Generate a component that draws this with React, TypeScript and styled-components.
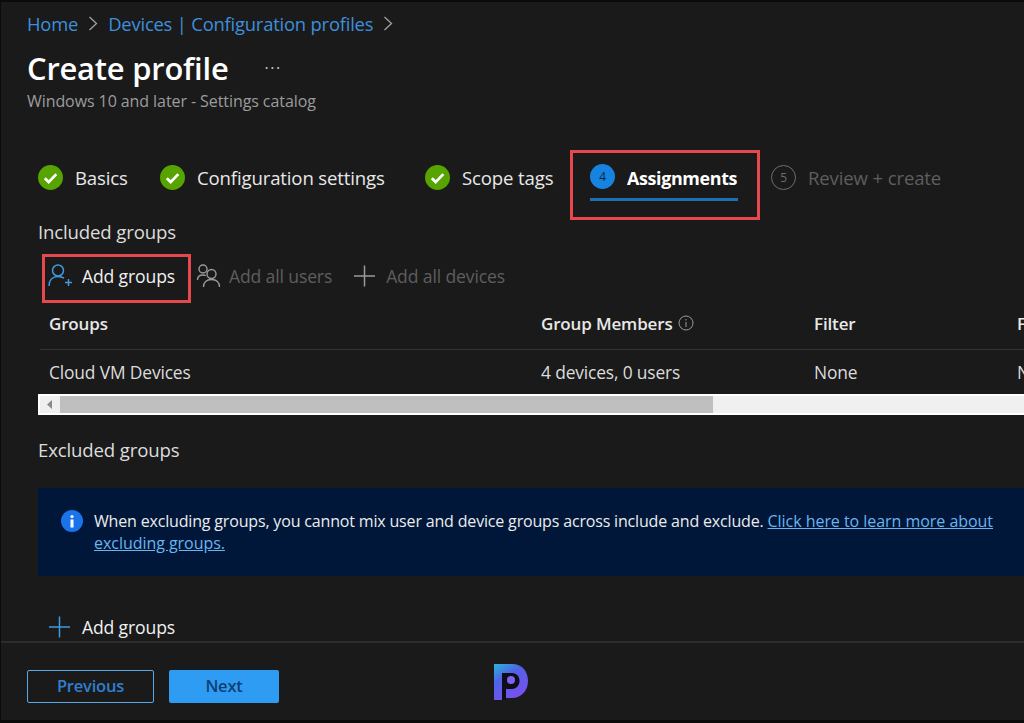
import React from "react";
import styled, { createGlobalStyle } from "styled-components";

const Global = createGlobalStyle`
  html, body { margin: 0; padding: 0; background: #1a1a1a; }
  * { box-sizing: border-box; }
`;

const FONT = `"Open Sans", "Noto Sans", "Liberation Sans", sans-serif`;

const Page = styled.div`
  width: 1024px;
  height: 723px;
  overflow: hidden;
  background: #1a1a1a;
  border-top: 2px solid #0b0b0b;
  border-bottom: 3px solid #0b0b0b;
  border-left: 1px solid #0b0b0b;
  font-family: ${FONT};
  color: #e6e6e6;
  display: flex;
  flex-direction: column;
`;

const Main = styled.div`
  height: 641px;
  flex: none;
  border-bottom: 2px solid #2c2c2c;
  overflow: hidden;
`;

const Header = styled.header`
  padding: 9px 0 0 26px;
  height: 148px;
`;

const Crumbs = styled.nav`
  display: flex;
  align-items: center;
  height: 24px;
  font-size: 18.4px;
  letter-spacing: -0.2px;
`;

const CrumbLink = styled.a`
  color: #3f8fdc;
`;

const Chevron = styled.svg`
  width: 10px;
  height: 15px;
  margin: 0 10px;
  fill: none;
  stroke: #a0a0a0;
  stroke-width: 1.3;
`;

const TitleRow = styled.div`
  display: flex;
  align-items: center;
  margin-top: 11px;
  height: 44px;
`;

const Title = styled.h1`
  margin: 0;
  font-size: 30.9px;
  font-weight: 600;
  color: #fff;
  letter-spacing: -0.2px;
`;

const More = styled.span`
  margin-left: 36px;
  font-size: 16px;
  color: #c8c8c8;
  letter-spacing: 1.5px;
  line-height: 1;
`;

const Subtitle = styled.div`
  font-size: 16px;
  color: #9c9c9c;
  letter-spacing: -0.08px;
`;

const Tabs = styled.div`
  display: flex;
  align-items: flex-start;
  height: 70px;
`;

const Step = styled.div<{ $w: number; $dim?: boolean }>`
  width: ${(p) => p.$w}px;
  height: 55px;
  display: flex;
  align-items: center;
  gap: 12px;
  padding-left: ${(p) => (p.$dim ? 11 : 0)}px;
  font-size: 18.6px;
  letter-spacing: -0.15px;
  color: ${(p) => (p.$dim ? "#5e5e5e" : "#e8e8e8")};
  flex: none;
  white-space: nowrap;
`;

const TabsLead = styled.div`
  width: 37px;
  flex: none;
`;

const Check = styled.svg`
  width: 25px;
  height: 25px;
  flex: none;
`;

const ActiveBox = styled.div`
  width: 190px;
  height: 70px;
  border: 3px solid #e5484d;
  flex: none;
  padding: 0 19px 0 17px;
`;

const ActiveInner = styled.div`
  height: 48px;
  padding-top: 4px;
  display: flex;
  align-items: center;
  gap: 12px;
  border-bottom: 3px solid #1f6fb2;
  font-size: 17.9px;
  font-weight: 700;
  color: #fff;
  letter-spacing: -0.35px;
`;

const NumBadge = styled.span`
  width: 25px;
  height: 25px;
  margin-top: -2px;
  border-radius: 50%;
  background: #1683e0;
  color: #0c2a47;
  font-size: 12px;
  font-weight: 400;
  display: flex;
  align-items: center;
  justify-content: center;
  flex: none;
`;

const NumRing = styled.span`
  width: 25px;
  height: 25px;
  border-radius: 50%;
  border: 1.5px solid #6e6e6e;
  color: #6e6e6e;
  font-size: 12px;
  display: flex;
  align-items: center;
  justify-content: center;
  flex: none;
`;

const SectionLabel = styled.div<{ $top: number }>`
  margin-left: 37px;
  margin-top: ${(p) => p.$top}px;
  height: 24px;
  line-height: 24px;
  font-size: 18.6px;
  letter-spacing: -0.15px;
  color: #dcdcdc;
`;

const Toolbar = styled.div`
  display: flex;
  align-items: center;
  margin-top: 10px;
  height: 49px;
  margin-left: 41px;
  font-size: 17.6px;
  letter-spacing: -0.15px;
`;

const AddGroupsBox = styled.div`
  width: 149px;
  height: 49px;
  border: 3px solid #e5484d;
  display: flex;
  align-items: center;
  padding: 0 0 5px 3px;
  color: #f0f0f0;
  flex: none;
`;

const ToolIcon = styled.svg<{ $w: number }>`
  width: ${(p) => p.$w}px;
  height: 26px;
  flex: none;
`;

const ToolItem = styled.div<{ $left: number }>`
  display: flex;
  align-items: center;
  padding-bottom: 5px;
  margin-left: ${(p) => p.$left}px;
  color: #5e5e5e;
`;

const Table = styled.div`
  margin-left: 39px;
  overflow: hidden;
`;

const Row = styled.div<{ $h: number; $head?: boolean }>`
  height: ${(p) => p.$h}px;
  display: grid;
  grid-template-columns: 9px 492px 273px 203px 100px;
  align-items: center;
  padding-bottom: ${(p) => (p.$head ? 6 : 0)}px;
  font-size: ${(p) => (p.$head ? 17 : 17.4)}px;
  letter-spacing: -0.15px;
  font-weight: ${(p) => (p.$head ? 600 : 400)};
  color: ${(p) => (p.$head ? "#e8e8e8" : "#dcdcdc")};
  border-bottom: ${(p) => (p.$head ? "1px solid #333" : "none")};
  white-space: nowrap;
`;

const HeadWithIcon = styled.div`
  display: flex;
  align-items: center;
  gap: 5px;
`;

const Scrollbar = styled.div`
  margin-left: 37px;
  height: 21px;
  border: 2px solid #fff;
  border-right: none;
  background: #f0f0f0;
  display: flex;
`;

const ScrollArrow = styled.div`
  width: 20px;
  background: #efefef;
  display: flex;
  align-items: center;
  justify-content: center;
  flex: none;
`;

const ScrollThumb = styled.div`
  width: 653px;
  background: #bfbfbf;
  flex: none;
`;

const Banner = styled.div`
  margin: 26px 0 0 37px;
  height: 88px;
  background: #00173a;
  display: flex;
  padding: 22px 0 0 23px;
  gap: 11px;
`;

const InfoIcon = styled.svg`
  width: 22px;
  height: 22px;
  flex: none;
`;

const BannerText = styled.div`
  font-size: 16px;
  line-height: 21.5px;
  letter-spacing: -0.17px;
  color: #ececec;
  white-space: nowrap;
  margin-top: 1px;
`;

const BannerLink = styled.a`
  color: #6bb4ee;
  text-decoration: underline;
  letter-spacing: -0.04px;
`;

const BottomAdd = styled.div`
  display: flex;
  align-items: center;
  margin: 38px 0 0 47px;
  height: 26px;
  font-size: 17.6px;
  letter-spacing: -0.15px;
  color: #f0f0f0;
`;

const Footer = styled.footer`
  flex: 1;
  display: flex;
  align-items: flex-start;
  padding: 27px 0 0 26px;
`;

const Previous = styled.button`
  width: 127px;
  height: 33px;
  background: transparent;
  border: 1px solid #5aa8e6;
  border-radius: 2px;
  color: #2f7fd0;
  font-family: ${FONT};
  font-size: 16.5px;
  font-weight: 600;
  letter-spacing: -0.2px;
  padding: 0 0 2px;
`;

const Next = styled.button`
  width: 110px;
  height: 33px;
  margin-left: 15px;
  background: #2f9cf4;
  border: none;
  border-radius: 2px;
  color: #0f3f73;
  font-family: ${FONT};
  font-size: 16.5px;
  font-weight: 600;
  letter-spacing: -0.2px;
  padding: 0 0 2px;
`;

const Logo = styled.svg`
  width: 38px;
  height: 40px;
  margin: -8px 0 0 213px;
  flex: none;
`;

const CheckIcon = () => (
  <Check viewBox="0 0 25 25">
    <circle cx="12.5" cy="12.5" r="12.5" fill="#57a300" />
    <path d="M6.8 13.2l3.9 3.9 7.6-8" fill="none" stroke="#fff" strokeWidth="2.8" />
  </Check>
);

export default function App() {
  return (
    <>
      <Global />
      <Page>
        <Main>
          <Header>
            <Crumbs>
              <CrumbLink>Home</CrumbLink>
              <Chevron viewBox="0 0 10 15"><path d="M1.5 1l7 6.5-7 6.5" /></Chevron>
              <CrumbLink>Devices | Configuration profiles</CrumbLink>
              <Chevron viewBox="0 0 10 15"><path d="M1.5 1l7 6.5-7 6.5" /></Chevron>
            </Crumbs>
            <TitleRow>
              <Title>Create profile</Title>
              <More>···</More>
            </TitleRow>
            <Subtitle>Windows 10 and later - Settings catalog</Subtitle>
          </Header>
          <Tabs>
            <TabsLead />
            <Step $w={122}><CheckIcon />Basics</Step>
            <Step $w={265}><CheckIcon />Configuration settings</Step>
            <Step $w={145}><CheckIcon />Scope tags</Step>
            <ActiveBox>
              <ActiveInner><NumBadge>4</NumBadge>Assignments</ActiveInner>
            </ActiveBox>
            <Step $w={200} $dim><NumRing>5</NumRing>Review + create</Step>
          </Tabs>
          <SectionLabel $top={0}>Included groups</SectionLabel>
          <Toolbar>
            <AddGroupsBox>
              <ToolIcon $w={34} viewBox="0 0 34 26" fill="none" strokeWidth="1.5">
                <circle cx="10" cy="7.5" r="5.5" stroke="#3f9ae0" />
                <path d="M1 23c0-6 3.500-9.500 9-9.500 2.500 0 4.500.6 6 1.700" stroke="#3f9ae0" />
                <path d="M17 19.500h7M20.500 16v7" stroke="#3f9ae0" />
              </ToolIcon>
              Add groups
            </AddGroupsBox>
            <ToolItem $left={5}>
              <ToolIcon $w={33} viewBox="0 0 33 26" fill="none" stroke="#9a9a9a" strokeWidth="1.4">
                <circle cx="7" cy="6" r="4" />
                <circle cx="15.5" cy="11" r="4.5" />
                <path d="M1.5 17c0-3 2-5 5.500-5 1 0 2 .2 2.700.6" />
                <path d="M7.500 24c0-4.500 3-7.500 8-7.500s8 3 8 7.500" />
              </ToolIcon>
              Add all users
            </ToolItem>
            <ToolItem $left={22}>
              <ToolIcon $w={32} viewBox="0 0 32 26" fill="none" stroke="#9a9a9a" strokeWidth="1.5">
                <path d="M0 13h21M10.500 2.500v21" />
              </ToolIcon>
              Add all devices
            </ToolItem>
          </Toolbar>
          <Table>
            <Row $h={47} $head>
              <span />
              <span>Groups</span>
              <HeadWithIcon>
                Group Members
                <svg width="16" height="16" viewBox="0 0 16 16" fill="none" stroke="#9a9a9a">
                  <circle cx="8" cy="8" r="7" />
                  <path d="M8 7v5M8 4v1.500" />
                </svg>
              </HeadWithIcon>
              <span>Filter</span>
              <span>Filter mode</span>
            </Row>
            <Row $h={44}>
              <span />
              <span>Cloud VM Devices</span>
              <span>4 devices, 0 users</span>
              <span>None</span>
              <span>None</span>
            </Row>
          </Table>
          <Scrollbar>
            <ScrollArrow>
              <svg width="6" height="9" viewBox="0 0 6 9"><path d="M5 0v9L0 4.500z" fill="#8a8a8a" /></svg>
            </ScrollArrow>
            <ScrollThumb />
          </Scrollbar>
          <SectionLabel $top={23}>Excluded groups</SectionLabel>
          <Banner>
            <InfoIcon viewBox="0 0 22 22">
              <circle cx="11" cy="11" r="11" fill="#1a73e8" />
              <circle cx="11" cy="6.500" r="1.600" fill="#fff" />
              <rect x="9.500" y="9.500" width="3" height="8" fill="#fff" />
            </InfoIcon>
            <BannerText>
              When excluding groups, you cannot mix user and device groups across include and exclude.{" "}
              <BannerLink>Click here to learn more about</BannerLink>
              <br />
              <BannerLink>excluding groups.</BannerLink>
            </BannerText>
          </Banner>
          <BottomAdd>
            <ToolIcon $w={34} viewBox="0 0 34 26" fill="none" stroke="#3f9ae0" strokeWidth="1.5">
              <path d="M1 13h21M11.500 2.500v21" />
            </ToolIcon>
            Add groups
          </BottomAdd>
        </Main>
        <Footer>
          <Previous>Previous</Previous>
          <Next>Next</Next>
          <Logo viewBox="0 0 38 40">
            <defs>
              <linearGradient id="pgrad" x1="0" y1="0" x2="0.600" y2="1">
                <stop offset="0" stopColor="#2bb5d8" />
                <stop offset="0.400" stopColor="#4f63e8" />
                <stop offset="1" stopColor="#7a4ff0" />
              </linearGradient>
            </defs>
            <path d="M2 2h18c10 0 16 7 16 17s-7 17-16 17h-8V26h-2v12H2z" fill="url(#pgrad)" />
            <rect x="10" y="11" width="4" height="27" fill="#0d0d18" />
            <path d="M14 11h6c5 0 7.500 4 7.500 8s-3 8-7.500 8h-6z" fill="#0d0d18" />
            <circle cx="19" cy="18" r="4" fill="#7d63f0" />
          </Logo>
        </Footer>
      </Page>
    </>
  );
}
